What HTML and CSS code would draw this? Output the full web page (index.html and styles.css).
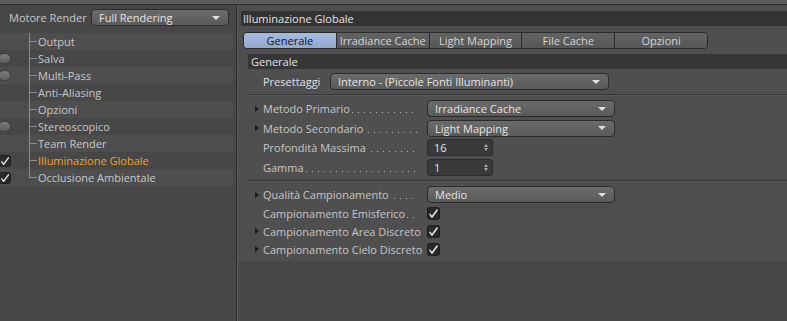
FILE: index.html
```html
<!DOCTYPE html>
<html lang="it">
<head>
  <meta charset="UTF-8">
  <title>Impostazioni Render</title>
  <link rel="stylesheet" href="styles.css">
</head>
<body>
  <div class="topbar"></div>

  <div class="main">
    <aside class="sidebar">
      <div class="engine">
        <span class="engine-label">Motore Render</span>
        <div class="select engine-select">Full Rendering</div>
      </div>

      <ul class="tree">
        <li class="row"><span class="slot"></span><span class="branch"></span><span class="name">Output</span></li>
        <li class="row"><span class="slot"><span class="toggle"></span></span><span class="branch"></span><span class="name">Salva</span></li>
        <li class="row"><span class="slot"><span class="toggle"></span></span><span class="branch"></span><span class="name">Multi-Pass</span></li>
        <li class="row"><span class="slot"></span><span class="branch"></span><span class="name">Anti-Aliasing</span></li>
        <li class="row"><span class="slot"></span><span class="branch"></span><span class="name">Opzioni</span></li>
        <li class="row"><span class="slot"><span class="toggle"></span></span><span class="branch"></span><span class="name">Stereoscopico</span></li>
        <li class="row"><span class="slot"></span><span class="branch"></span><span class="name">Team Render</span></li>
        <li class="row">
          <span class="slot">
            <svg class="check side-check" width="12" height="12" viewBox="0 0 12 12"><rect x="0.5" y="0.5" width="11" height="11" rx="2.5" fill="#2a2a2a" stroke="#1f1f1f"/><path d="M2.8 6.8 L4.6 9.3 L9.4 2.8" fill="none" stroke="#e6e6e6" stroke-width="1.4" stroke-linecap="round" stroke-linejoin="round"/></svg>
          </span>
          <span class="branch"></span><span class="name active">Illuminazione Globale</span>
        </li>
        <li class="row">
          <span class="slot">
            <svg class="check side-check" width="12" height="12" viewBox="0 0 12 12"><rect x="0.5" y="0.5" width="11" height="11" rx="2.5" fill="#2a2a2a" stroke="#1f1f1f"/><path d="M2.8 6.8 L4.6 9.3 L9.4 2.8" fill="none" stroke="#e6e6e6" stroke-width="1.4" stroke-linecap="round" stroke-linejoin="round"/></svg>
          </span>
          <span class="branch last"></span><span class="name">Occlusione Ambientale</span>
        </li>
      </ul>
    </aside>

    <section class="panel">
      <div class="panel-body">
        <div class="title">Illuminazione Globale</div>

        <div class="tabs">
          <div class="tab selected">Generale</div>
          <div class="tab">Irradiance Cache</div>
          <div class="tab">Light Mapping</div>
          <div class="tab">File Cache</div>
          <div class="tab">Opzioni</div>
        </div>

        <div class="group">
          <div class="group-title">Generale</div>

          <div class="preset">
            <span class="preset-label">Presettaggi</span>
            <div class="select preset-select">Interno - (Piccole Fonti Illuminanti)</div>
          </div>

          <div class="sep"></div>

          <div class="params">
            <div class="param">
              <span class="arrow"></span>
              <span class="label">Metodo Primario<span class="dots"></span></span>
              <div class="select field">Irradiance Cache</div>
            </div>
            <div class="param">
              <span class="arrow"></span>
              <span class="label">Metodo Secondario<span class="dots spaced"></span></span>
              <div class="select field">Light Mapping</div>
            </div>
            <div class="param">
              <span class="arrow none"></span>
              <span class="label">Profondità Massima<span class="dots spaced"></span></span>
              <div class="number">16<span class="spin"></span></div>
            </div>
            <div class="param">
              <span class="arrow none"></span>
              <span class="label">Gamma<span class="dots"></span></span>
              <div class="number">1<span class="spin"></span></div>
            </div>
          </div>

          <div class="sep"></div>

          <div class="params lower">
            <div class="param">
              <span class="arrow"></span>
              <span class="label">Qualità Campionamento<span class="dots spaced"></span></span>
              <div class="select field">Medio</div>
            </div>
            <div class="param short">
              <span class="arrow none"></span>
              <span class="label">Campionamento Emisferico<span class="dots"></span></span>
              <svg class="check" width="13" height="13" viewBox="0 0 12 12"><rect x="0.5" y="0.5" width="11" height="11" rx="2.5" fill="#2a2a2a" stroke="#1f1f1f"/><path d="M2.8 6.8 L4.6 9.3 L9.4 2.8" fill="none" stroke="#e6e6e6" stroke-width="1.4" stroke-linecap="round" stroke-linejoin="round"/></svg>
            </div>
            <div class="param short">
              <span class="arrow"></span>
              <span class="label">Campionamento Area Discreto</span>
              <svg class="check" width="13" height="13" viewBox="0 0 12 12"><rect x="0.5" y="0.5" width="11" height="11" rx="2.5" fill="#2a2a2a" stroke="#1f1f1f"/><path d="M2.8 6.8 L4.6 9.3 L9.4 2.8" fill="none" stroke="#e6e6e6" stroke-width="1.4" stroke-linecap="round" stroke-linejoin="round"/></svg>
            </div>
            <div class="param short">
              <span class="arrow"></span>
              <span class="label">Campionamento Cielo Discreto</span>
              <svg class="check" width="13" height="13" viewBox="0 0 12 12"><rect x="0.5" y="0.5" width="11" height="11" rx="2.5" fill="#2a2a2a" stroke="#1f1f1f"/><path d="M2.8 6.8 L4.6 9.3 L9.4 2.8" fill="none" stroke="#e6e6e6" stroke-width="1.4" stroke-linecap="round" stroke-linejoin="round"/></svg>
            </div>
          </div>
        </div>
      </div>
    </section>
  </div>
</body>
</html>
```

FILE: styles.css
```css
* {
  box-sizing: border-box;
}

body {
  margin: 0;
  width: 787px;
  height: 321px;
  overflow: hidden;
  background-color: #484848;
  color: #c6c6c6;
  font-family: "Open Sans", "Noto Sans", sans-serif;
  font-size: 11px;
}

.topbar {
  height: 5px;
  background: #5b5b5b;
  border-bottom: 1px solid #2e2e2e;
}

.main {
  display: flex;
  height: 316px;
}

/* left column */

.sidebar {
  width: 237px;
  flex-shrink: 0;
  border-right: 1px solid #2e2e2e;
  background: #474747;
}

.engine {
  display: flex;
  align-items: center;
  height: 17px;
  margin-top: 4px;
  padding: 0 7px 0 9px;
}

.engine-label {
  color: #c8c8c8;
}

.select {
  display: flex;
  align-items: center;
  justify-content: space-between;
  height: 17px;
  padding: 0 8px 0 7px;
  background: linear-gradient(#6b6b6b, #5a5a5a);
  border: 1px solid #2b2b2b;
  border-radius: 4px;
  color: #e4e4e4;
  white-space: nowrap;
}

.select::after {
  content: "";
  border-top: 4px solid #e0e0e0;
  border-left: 4px solid transparent;
  border-right: 4px solid transparent;
}

.engine-select {
  width: 138px;
  margin-left: auto;
}

.tree {
  list-style: none;
  margin: 7px 3px 0 0;
  padding: 0;
}

.row {
  display: flex;
  align-items: center;
  height: 17px;
  background: #474747;
}

.row:nth-child(odd) {
  background: #4e4e4e;
}

.slot {
  display: flex;
  align-items: center;
  width: 29px;
  height: 17px;
  flex-shrink: 0;
}

.toggle {
  width: 13px;
  height: 11px;
  margin-left: -2px;
  border-radius: 6px;
  border: 1px solid #3c3c3c;
  background: linear-gradient(#7c7c7c, #5e5e5e);
}

.side-check {
  margin-left: -1px;
}

.branch {
  width: 8px;
  height: 17px;
  flex-shrink: 0;
  background:
    linear-gradient(#8c8c8c, #8c8c8c) left top / 1px 100% no-repeat,
    linear-gradient(#8c8c8c, #8c8c8c) left 8px / 100% 1px no-repeat;
}

.branch.last {
  background:
    linear-gradient(#8c8c8c, #8c8c8c) left top / 1px 9px no-repeat,
    linear-gradient(#8c8c8c, #8c8c8c) left 8px / 100% 1px no-repeat;
}

.name {
  margin-left: 1px;
  color: #c8c8c8;
}

.name.active {
  color: #f2a12c;
}

/* right column */

.panel {
  flex: 1;
  border-left: 1px solid #585858;
}

.panel-body {
  height: 256px;
  padding-top: 6px;
  background: #4f4f4f;
}

.title {
  height: 15px;
  line-height: 15px;
  margin-left: 3px;
  padding-left: 2px;
  background: #333333;
  color: #e2e2e2;
}

.tabs {
  display: flex;
  width: 465px;
  height: 17px;
  margin: 6px 0 0 5px;
  border: 1px solid #2b2b2b;
  border-radius: 4px;
  overflow: hidden;
}

.tab {
  flex: 1;
  text-align: center;
  line-height: 15px;
  background: linear-gradient(#636363, #575757);
  border-left: 1px solid #2b2b2b;
  color: #d4d4d4;
  white-space: nowrap;
}

.tab:first-child {
  border-left: none;
}

.tab.selected {
  background: linear-gradient(#a6bde0, #8ea8d0);
  color: #141414;
}

.group {
  margin: 5px 0 0 10px;
}

.group-title {
  height: 15px;
  line-height: 15px;
  padding-left: 3px;
  background: #363636;
  color: #e2e2e2;
}

.preset {
  display: flex;
  align-items: center;
  height: 19px;
  margin-top: 3px;
  padding-left: 15px;
}

.preset-label {
  color: #e0e0e0;
  width: 67px;
}

.preset-select {
  width: 279px;
}

.sep {
  height: 2px;
  margin: 3px 0;
  border-top: 1px solid #383838;
  border-bottom: 1px solid #575757;
}

.params {
  display: flex;
  flex-direction: column;
}

.param {
  display: flex;
  align-items: center;
  height: 19.5px;
  padding-left: 7px;
}

.lower .param {
  height: 19px;
}

.lower .param.short {
  height: 18px;
}

.arrow {
  width: 8px;
  height: 6px;
  flex-shrink: 0;
  border-left: 4px solid #1b1b1b;
  border-top: 3px solid transparent;
  border-bottom: 3px solid transparent;
  border-right: 4px solid transparent;
}

.arrow.none {
  border-left-color: transparent;
}

.label {
  display: flex;
  align-items: stretch;
  width: 164px;
  flex-shrink: 0;
  white-space: nowrap;
  color: #c6c6c6;
  padding-right: 10px;
}

.dots {
  flex: 1;
  margin-left: 1px;
  background: linear-gradient(to right, #b4b4b4 1px, transparent 1px) 1px 11px / 6px 1px repeat-x;
}

.dots.spaced {
  margin-left: 4px;
}

.field {
  width: 188px;
}

.number {
  display: flex;
  align-items: center;
  justify-content: space-between;
  width: 66px;
  height: 17px;
  padding: 0 4px 0 6px;
  background: #3a3a3a;
  border: 1px solid #2c2c2c;
  border-radius: 3px;
  color: #e2e2e2;
}

.spin {
  display: flex;
  flex-direction: column;
  gap: 1px;
}

.spin::before {
  content: "";
  border-bottom: 3px solid #a8a8a8;
  border-left: 2.5px solid transparent;
  border-right: 2.5px solid transparent;
}

.spin::after {
  content: "";
  border-top: 3px solid #a8a8a8;
  border-left: 2.5px solid transparent;
  border-right: 2.5px solid transparent;
}

.check {
  flex-shrink: 0;
}
```
